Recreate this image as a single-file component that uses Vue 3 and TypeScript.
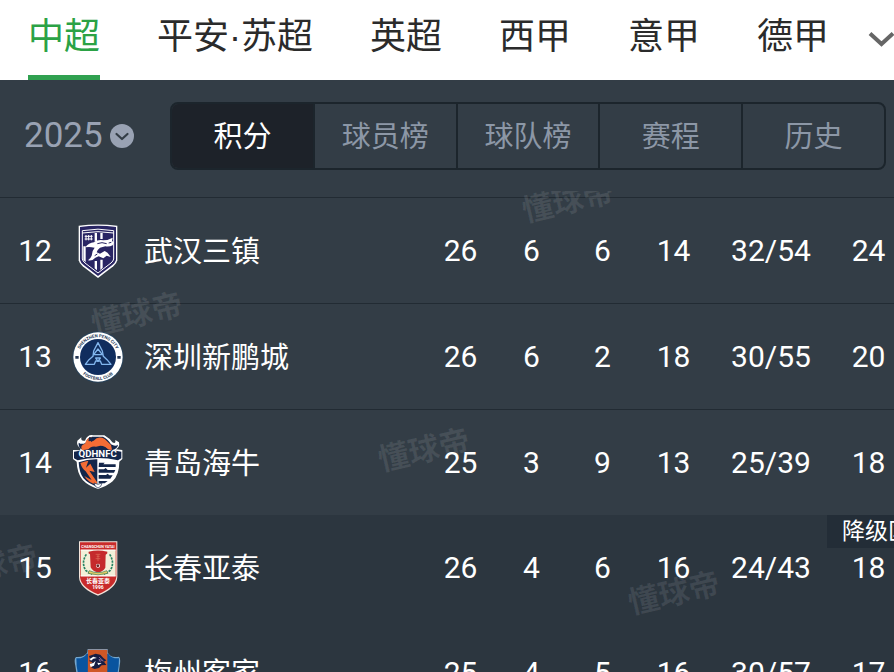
<script setup lang="ts">
import { ref } from 'vue'

interface Team {
  rank: number
  name: string
  crest: string
  played: number
  won: number
  drawn: number
  lost: number
  goals: string
  points: number
  relegated?: boolean
  zone?: string
}

const leagues: string[] = ['中超', '平安·苏超', '英超', '西甲', '意甲', '德甲']
const league = ref('中超')

const seasons: string[] = ['2025', '2024', '2023']
const season = ref('2025')

const views: string[] = ['积分', '球员榜', '球队榜', '赛程', '历史']
const view = ref('积分')

const teams: Team[] = [
  { rank: 12, name: '武汉三镇', crest: 'wuhan', played: 26, won: 6, drawn: 6, lost: 14, goals: '32/54', points: 24 },
  { rank: 13, name: '深圳新鹏城', crest: 'shenzhen', played: 26, won: 6, drawn: 2, lost: 18, goals: '30/55', points: 20 },
  { rank: 14, name: '青岛海牛', crest: 'qingdao', played: 25, won: 3, drawn: 9, lost: 13, goals: '25/39', points: 18 },
  { rank: 15, name: '长春亚泰', crest: 'changchun', played: 26, won: 4, drawn: 6, lost: 16, goals: '24/43', points: 18, relegated: true, zone: '降级区' },
  { rank: 16, name: '梅州客家', crest: 'meizhou', played: 25, won: 4, drawn: 5, lost: 16, goals: '30/57', points: 17, relegated: true },
]

const marks: string[] = ['a', 'b', 'c', 'd', 'e']
</script>

<template>
  <div class="page">
    <nav class="leagues">
      <a
        v-for="item in leagues"
        :key="item"
        href="#"
        class="league"
        :class="{ current: item === league }"
        @click.prevent="league = item"
      >{{ item }}</a>
      <button class="more" type="button" aria-label="更多">
        <svg width="28" height="18" viewBox="0 0 28 18">
          <path d="M2 3.500L13.500 14L25 3.500" fill="none" stroke="#666" stroke-width="4" />
        </svg>
      </button>
    </nav>

    <section class="filters">
      <label class="season">
        <select v-model="season" aria-label="赛季">
          <option v-for="item in seasons" :key="item">{{ item }}</option>
        </select>
        <svg width="24" height="24" viewBox="0 0 24 24">
          <circle cx="12" cy="12" r="12" fill="#99a2b3" />
          <path d="M6.500 10L12 15L17.500 10" fill="none" stroke="#333d46" stroke-width="2.200" stroke-linecap="round" stroke-linejoin="round" />
        </svg>
      </label>
      <div class="views">
        <button
          v-for="item in views"
          :key="item"
          type="button"
          class="view"
          :class="{ current: item === view }"
          @click="view = item"
        >{{ item }}</button>
      </div>
    </section>

    <main class="board">
      <table>
        <colgroup>
          <col class="c-rank" /><col class="c-crest" /><col />
          <col class="c-num" /><col class="c-num" /><col class="c-num" /><col class="c-num" />
          <col class="c-goals" /><col class="c-num" />
        </colgroup>
        <tbody>
          <tr v-for="team in teams" :key="team.rank" :class="{ relegated: team.relegated }">
            <td>{{ team.rank }}</td>
            <td>
              <svg class="crest" viewBox="30 30 168 180">
                <g v-if="team.crest === 'wuhan'">
                  <path d="M56 44Q114 37 172 44V148Q170 158 160 166L114 201L68 166Q58 158 56 148Z" fill="#fff" />
                  <path d="M60 48Q114 41 168 48V147Q166 155 157 162L114 195L71 162Q62 155 60 147Z" fill="#292563" />
                  <path d="M67 59Q114 50 161 59V144Q160 150 153 156L114 186L75 156Q68 150 67 144Z" fill="none" stroke="#fff" stroke-width="3" />
                  <path d="M67 66Q114 58 161 66" fill="none" stroke="#fff" stroke-width="3" />
                  <path d="M104 66H111V92H104ZM121 66H128V84H121ZM104 150H111V178L104 172ZM121 146H128V171L121 177ZM70 106H77V154L70 147Z" fill="#fff" />
                  <path d="M78 72V88M86 72V88M94 72V88M74 76H98M74 84H98" stroke="#fff" stroke-width="3" />
                  <path d="M76 109Q86 96 102 94Q116 84 130 88Q144 88 158 80L156 90L162 94L158 103Q148 108 136 106L120 110Q112 116 110 124L120 128L134 120Q144 124 152 138L140 134L130 142L116 136L106 140Q98 150 84 148Q92 142 95 134L98 120L104 110Q88 106 76 109Z" fill="#fff" />
                  <path d="M112 98L126 95L140 98M104 134L112 129M146 96L154 94" fill="none" stroke="#292563" stroke-width="3" />
                </g>

                <g v-else-if="team.crest === 'shenzhen'">
                  <circle cx="114" cy="120" r="77" fill="#27425a" />
                  <circle cx="114" cy="120" r="74" fill="#fff" />
                  <circle cx="114" cy="120" r="54" fill="#102d5e" />
                  <path id="ring-top" d="M55 120A59 59 0 0 1 173 120" fill="none" />
                  <path id="ring-bottom" d="M45 120A69 69 0 0 0 183 120" fill="none" />
                  <text class="ring-text"><textPath href="#ring-top" startOffset="50%" text-anchor="middle">SHENZHEN PENG CITY</textPath></text>
                  <text class="ring-text"><textPath href="#ring-bottom" startOffset="50%" text-anchor="middle">FOOTBALL CLUB</textPath></text>
                  <path d="M46 117H56V125H46ZM172 117H182V125H172Z" fill="#243653" />
                  <path d="M114 77L101 102L99 118L87 128L76 142H103L107 132H121L125 142H153L141 128L130 118L127 102Z" fill="none" stroke="#82b6ee" stroke-width="4" stroke-linejoin="round" />
                  <path d="M101 113L114 96L127 113ZM107 123H121L114 133Z" fill="#102d5e" stroke="#82b6ee" stroke-width="4" stroke-linejoin="round" />
                </g>

                <g v-else-if="team.crest === 'qingdao'">
                  <path d="M62 76Q48 67 52 53L64 43Q62 56 75 53Q83 33 100 37L133 37Q149 46 157 58Q168 64 166 51L177 58Q180 73 168 79L187 81V108L178 116Q178 154 158 175Q142 189 114 198Q84 188 68 171Q51 150 50 116L39 108V81L60 82Z" fill="#fff" />
                  <path d="M67 80Q54 73 56 59Q66 66 77 59Q83 41 97 41L129 41Q145 49 153 64Q166 72 174 65Q173 77 157 81Z" fill="#14264a" />
                  <path d="M66 82Q59 66 75 62Q80 44 96 42L86 55L101 53Q115 37 134 48L153 66L156 80L147 82Q137 68 121 68L108 71Q91 68 83 82Z" fill="#f46c35" />
                  <path d="M88 42L104 47L95 57Q91 52 85 54ZM117 73Q133 67 144 80H119Z" fill="#14264a" />
                  <path d="M42 86L71 81Q114 74 156 81L184 86V106L174 112Q114 98 53 112L42 106Z" fill="#14264a" />
                  <text x="113" y="103" text-anchor="middle" class="qd-text">QDHNFC</text>
                  <path d="M56 118Q84 108 112 109V191Q83 181 70 165Q58 150 56 118Z" fill="#14264a" />
                  <path d="M61 120Q72 115 85 113L78 134L91 122L104 147L88 143L111 177V186Q85 179 73 159Q84 166 95 171L77 145Q66 137 61 120Z" fill="#f46c35" />
                  <path d="M115 109Q148 110 172 118Q170 148 153 169Q137 183 115 191Z" fill="#fff" />
                  <path d="M117 119H134L130 124H167V132H116ZM116 139H132L137 135L143 141H166L162 149H116ZM116 156H138L143 152L148 157H158L151 167H116ZM116 174H143L134 181H116Z" fill="#14264a" />
                  <path d="M102 180L114 184L126 180L122 190L114 195L106 190Z" fill="#fff" stroke="#14264a" stroke-width="2" />
                </g>

                <g v-else-if="team.crest === 'changchun'">
                  <path d="M57 40H172V147Q170 181 114 203Q58 181 57 147Z" fill="#f4e5dc" />
                  <path d="M60 43H169V147Q166 177 114 199Q62 177 60 147Z" fill="#c92b2b" />
                  <path d="M62 66H167V144H62Z" fill="#f3efd9" />
                  <path d="M62 66H167M62 144H167" stroke="#fff" stroke-width="3" />
                  <path d="M90 79Q83 76 86 71Q114 64 142 71Q144 77 137 80L136 119Q128 132 114 133Q99 132 92 118Z" fill="#c52a2d" />
                  <path d="M107 79H121M110 85H119M107 92H121M114 79V99" stroke="#e0705a" stroke-width="2" />
                  <circle cx="114" cy="113" r="6" fill="#fff" /><path d="M114 108L118 112L116 117H111L109 112Z" fill="#6c2727" />
                  <path d="M79 79Q63 104 77 127L96 139M149 79Q165 104 151 127L132 139" fill="none" stroke="#298263" stroke-width="5" stroke-dasharray="7 3" />
                  <path d="M88 128Q114 140 140 128L144 136Q114 145 84 136Z" fill="#e5cf65" stroke="#3b7754" stroke-width="2" />
                  <text x="114" y="60" text-anchor="middle" class="cc-top">CHANGCHUN YATAI</text>
                  <text x="114" y="165" text-anchor="middle" class="cc-name">长春亚泰</text>
                  <text x="114" y="182" text-anchor="middle" class="cc-year">1996</text>
                </g>

                <g v-else>
                  <path d="M83 48H143V58Q150 76 177 71Q183 76 179 98L173 145Q160 180 114 201Q66 180 53 145L46 98Q41 77 48 72Q74 74 82 58Z" fill="#75a7ce" />
                  <path d="M80 62Q72 77 49 76L50 99L57 142Q69 176 114 196Q157 176 169 142L176 99L177 76Q153 77 145 62Z" fill="#09549f" />
                  <path d="M84 50H142V176L114 192L83 176Z" fill="#cf5726" />
                  <path d="M90 78L87 69L96 66L107 62L121 65L130 75L139 82L132 86L139 96L125 97L117 105L104 108L94 104L97 99L88 95L98 88L88 85Z" fill="#161d43" />
                  <path d="M89 78L100 71L111 75L100 77L93 83ZM89 93L100 90L107 83L102 98L92 102ZM112 89L125 91L115 96Z" fill="#fff" />
                  <path d="M117 72L130 84L117 79L122 88" fill="none" stroke="#7e638e" stroke-width="3" />
                </g>
              </svg>
            </td>
            <th scope="row">{{ team.name }}</th>
            <td>{{ team.played }}</td>
            <td>{{ team.won }}</td>
            <td>{{ team.drawn }}</td>
            <td>{{ team.lost }}</td>
            <td>{{ team.goals }}</td>
            <td class="points">
              {{ team.points }}
              <span v-if="team.zone" class="zone">{{ team.zone }}</span>
            </td>
          </tr>
        </tbody>
      </table>
      <div class="marks" aria-hidden="true">
        <span v-for="mark in marks" :key="mark" class="mark" :class="`mark-${mark}`">懂球帝</span>
      </div>
    </main>
  </div>
</template>

<style>
body {
  background: #2c363f;
}
</style>

<style scoped>
.page {
  height: 100vh;
  overflow: hidden;
  display: flex;
  flex-direction: column;
  background: #333d46;
  color: #fff;
  font-family: Roboto, "Noto Sans CJK SC", sans-serif;
}

.leagues {
  flex: none;
  display: flex;
  gap: 57px;
  height: 80px;
  padding-left: 28px;
  overflow: hidden;
  background: #fff;
}

.league {
  flex: none;
  box-sizing: border-box;
  height: 80px;
  border-bottom: 5px solid transparent;
  color: #2b2b2b;
  font-family: "Liberation Sans", "Noto Sans CJK SC", sans-serif;
  font-size: 36px;
  line-height: 74px;
  text-decoration: none;
  white-space: nowrap;
}

.league.current {
  border-color: #30a150;
  color: #2ba245;
}

.more {
  flex: none;
  display: flex;
  align-items: center;
  height: 78px;
  margin-left: -18px;
  padding: 0;
  border: 0;
  background: none;
}

.filters {
  flex: none;
  display: flex;
  align-items: center;
  gap: 36px;
  padding: 22px 8px 27px 24px;
}

.season {
  flex: none;
  display: flex;
  align-items: center;
  gap: 4px;
}

.season select {
  appearance: none;
  width: 82px;
  padding: 0;
  border: 0;
  background: none;
  color: #99a2b3;
  font-family: inherit;
  font-size: 35px;
  line-height: 48px;
}

.views {
  flex: 1;
  display: flex;
  box-sizing: border-box;
  height: 68px;
  border: 2px solid #1c252c;
  border-radius: 8px;
  overflow: hidden;
}

.view {
  flex: 1;
  min-width: 0;
  padding: 0 0 4px;
  border: 0;
  border-right: 2px solid #1c252c;
  background: none;
  color: #8c97a6;
  font-family: "Noto Sans CJK SC", sans-serif;
  font-size: 29px;
  line-height: 40px;
}

.view:last-child {
  border-right: 0;
}

.view.current {
  background: #1d2229;
  color: #fff;
}

.board {
  flex: 1;
  min-height: 0;
  position: relative;
}

table {
  width: calc(100% + 10px);
  table-layout: fixed;
  border-collapse: separate;
  border-spacing: 0;
  font-size: 30px;
}

.c-rank {
  width: 70px;
}

.c-crest {
  width: 56px;
}

.c-num {
  width: 71px;
}

.c-goals {
  width: 124px;
}

td,
th {
  box-sizing: border-box;
  height: 106px;
  padding: 0;
  border-top: 1px solid #222b33;
  text-align: center;
  vertical-align: middle;
  white-space: nowrap;
}

th {
  padding: 0 0 4px 18px;
  font-family: "Noto Sans CJK SC", sans-serif;
  font-size: 29px;
  font-weight: 400;
  text-align: left;
}

.relegated td,
.relegated th {
  height: 105px;
  border-top: 0;
  background: #2c363f;
}

.crest {
  display: block;
  width: 56px;
  height: 60px;
}

.points {
  position: relative;
}

.zone {
  position: absolute;
  top: 0;
  left: -6px;
  padding: 0 15px;
  background: #232d37;
  font-size: 23px;
  line-height: 33px;
}

.marks {
  position: absolute;
  inset: -6px 0 0;
  overflow: hidden;
  pointer-events: none;
}

.mark {
  position: absolute;
  color: rgba(255, 255, 255, 0.09);
  font-family: "Noto Sans CJK SC", sans-serif;
  font-size: 31px;
  font-weight: 700;
  line-height: 40px;
  transform: rotate(-13deg);
}

.mark-a {
  top: -12px;
  left: 521px;
}

.mark-b {
  top: 101px;
  left: 90px;
}

.mark-c {
  top: 237px;
  left: 377px;
}

.mark-d {
  top: 380px;
  left: 627px;
}

.mark-e {
  top: 353px;
  left: -55px;
}

.ring-text {
  fill: #203452;
  font-size: 13px;
  font-weight: 700;
}

.qd-text {
  fill: #fff;
  font-size: 29px;
  font-weight: 700;
}

.cc-top {
  fill: #fff;
  font-size: 11px;
  font-weight: 700;
}

.cc-name {
  fill: #fff;
  font-size: 18px;
  font-weight: 700;
}

.cc-year {
  fill: #fff;
  font-size: 15px;
  font-weight: 700;
}
</style>
